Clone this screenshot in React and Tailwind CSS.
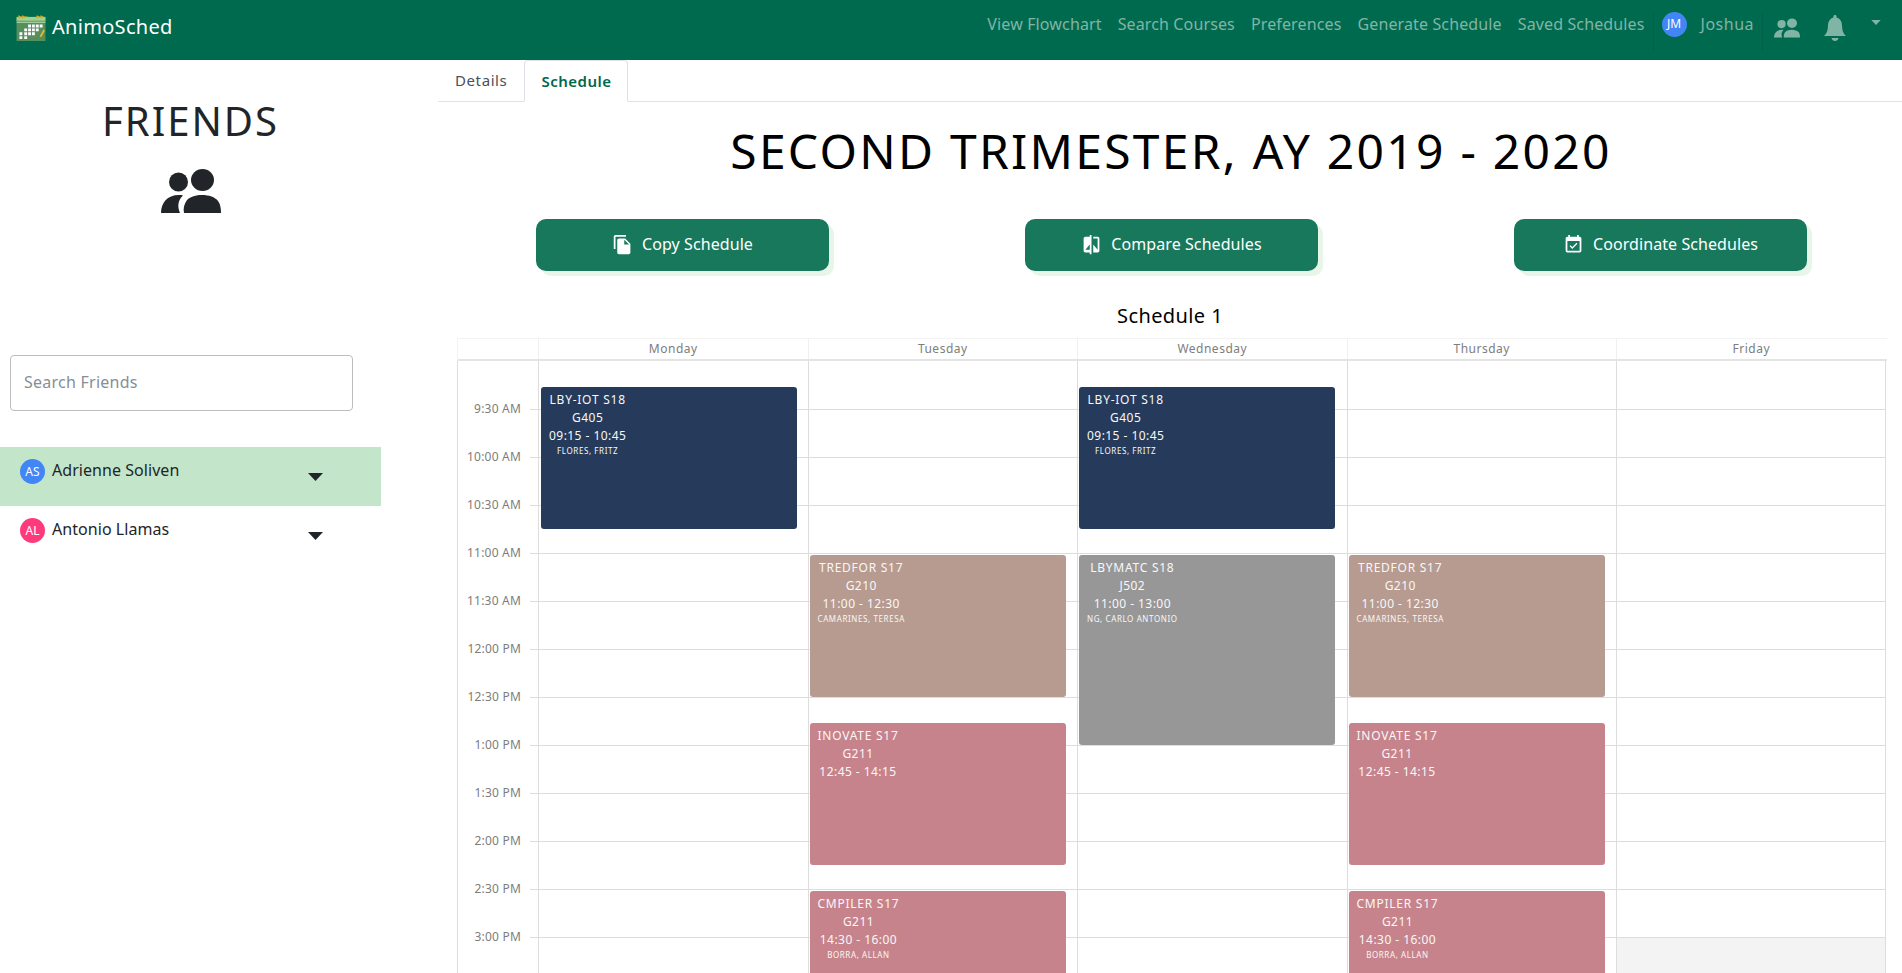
import { MdFileCopy, MdCompare, MdEventAvailable } from 'react-icons/md';

const navLinks = ['View Flowchart', 'Search Courses', 'Preferences', 'Generate Schedule', 'Saved Schedules'];

const friends = [
  { initials: 'AS', name: 'Adrienne Soliven', avatar: 'bg-[#4285f4]', row: 'bg-[#c3e5ca]' },
  { initials: 'AL', name: 'Antonio Llamas', avatar: 'bg-[#ff3a7c]', row: 'bg-white' },
];

const slots = ['', '9:30 AM', '10:00 AM', '10:30 AM', '11:00 AM', '11:30 AM', '12:00 PM', '12:30 PM', '1:00 PM', '1:30 PM', '2:00 PM', '2:30 PM', '3:00 PM'];

const days = ['Monday', 'Tuesday', 'Wednesday', 'Thursday', 'Friday'];

const lbyIot = { title: 'LBY-IOT S18', room: 'G405', time: '09:15 - 10:45', prof: 'FLORES, FRITZ', top: 26, height: 142, color: 'bg-[#263b5b]' };
const tredfor = { title: 'TREDFOR S17', room: 'G210', time: '11:00 - 12:30', prof: 'CAMARINES, TERESA', top: 194, height: 142, color: 'bg-[#b79b90]' };
const inovate = { title: 'INOVATE S17', room: 'G211', time: '12:45 - 14:15', prof: '', top: 362, height: 142, color: 'bg-[#c7838b]' };
const cmpiler = { title: 'CMPILER S17', room: 'G211', time: '14:30 - 16:00', prof: 'BORRA, ALLAN', top: 530, height: 142, color: 'bg-[#c7838b]' };
const lbymatc = { title: 'LBYMATC S18', room: 'J502', time: '11:00 - 13:00', prof: 'NG, CARLO ANTONIO', top: 194, height: 190, color: 'bg-[#979797]' };

const schedule = [
  { left: 3, events: [lbyIot] },
  { left: 2, events: [tredfor, inovate, cmpiler] },
  { left: 2, events: [lbyIot, lbymatc] },
  { left: 2, events: [tredfor, inovate, cmpiler] },
  { left: 2, events: [] },
];

const PeopleIcon = ({ className }) => (
  <svg viewBox="0 0 60 44" className={className} fill="currentColor">
    <ellipse cx="17.5" cy="13" rx="9.5" ry="9.5" />
    <ellipse cx="41.5" cy="11" rx="11.5" ry="11" />
    <path d="M0 44c0-10 6-18 18-18 1.500 0 3 .1 4 .4C17 31 16 37 19 44z" />
    <path d="M23 44c-1-4 0-9 3-13 3.500-3.500 9-5 15-5 7 0 13 2 16 6 2.500 3 3 8 3 12z" />
  </svg>
);

const BellIcon = ({ className }) => (
  <svg viewBox="0 0 22 26" className={className} fill="currentColor">
    <path d="M11 0c1 0 1.600.7 1.600 1.600v.8C16 3.300 17.800 6 18 10c.2 4 .5 8 4 11H0c3.500-3 3.800-7 4-11 .2-4 2-6.700 5.400-7.600v-.8C9.400.7 10 0 11 0z" />
    <path d="M7.500 23h7c-.3 1.800-1.700 3-3.500 3s-3.200-1.200-3.500-3z" />
  </svg>
);

const Logo = () => (
  <svg viewBox="0 0 30 28" className="w-[30px] h-[27px]">
    <rect x="0" y="5" width="30" height="23" fill="#558f5c" />
    <rect x="0" y="3" width="30" height="4" fill="#9ed28f" />
    <rect x="0" y="8" width="30" height="1" fill="#c9e6c0" />
    <path d="M2 1l3 2-3 2zM6 1l3 2-3 2zM21 1l3 2-3 2zM25 1l3 2-3 2z" fill="#e0aa1c" />
    <path d="M2 3h10M20 3h8" stroke="#e0aa1c" strokeWidth="0.8" />
    <path d="M12 11h3v3h-3zM16 11h3v3h-3zM20 11h3v3h-3zM24 11h3v3h-3zM8 15h3v3H8zM12 15h3v3h-3zM16 15h3v3h-3zM20 15h3v3h-3zM3 19h3v3H3zM8 19h3v3H8zM12 19h3v3h-3zM16 19h3v3h-3zM3 23h3v3H3zM8 23h3v3H8z" fill="#fff" />
    <path d="M24 23l4-7 1.500 1-4 7z" fill="#f1b82d" />
  </svg>
);

const Caret = ({ className }) => (
  <svg viewBox="0 0 15 8" className={className} fill="currentColor">
    <path d="M0 0h15L7.500 8z" />
  </svg>
);

const Header = () => (
  <header className="h-[60px] bg-[#006a4e] flex items-start justify-between pl-4 pr-[21px]">
    <div className="flex items-center gap-[6px] h-[54px]">
      <Logo />
      <span className="text-white text-[20px] tracking-[0.3px]">AnimoSched</span>
    </div>
    <div className="flex items-center h-[48px] text-[#80b5a6]">
      <nav className="flex gap-4 pr-2 text-[16px] tracking-[0.13px]">
        {navLinks.map((link) => (
          <a key={link}>{link}</a>
        ))}
      </nav>
      <div className="flex items-center h-[38px] mt-[16px] pb-[16px] border-l border-r border-[#00604a] px-2">
        <span className="w-[25px] h-[25px] rounded-full bg-[#4285f4] text-white text-[12px] flex items-center justify-center">JM</span>
        <span className="ml-[14px] text-[16px] tracking-[0.5px]">Joshua</span>
      </div>
      <PeopleIcon className="ml-[11px] w-[26px] h-[20px] mt-[8px]" />
      <BellIcon className="ml-[24px] w-[22px] h-[26px] mt-[8px]" />
      <Caret className="ml-[25px] w-[10px] h-[5px] mb-[3px]" />
    </div>
  </header>
);

const Sidebar = () => (
  <aside className="w-[381px] shrink-0">
    <h1 className="mt-[37px] text-[40px] leading-[48px] text-center text-[#212529] tracking-[2px]">FRIENDS</h1>
    <PeopleIcon className="mt-6 mx-auto w-[60px] h-[44px] text-[#212529]" />
    <div className="mt-[142px] ml-[10px] w-[343px] h-[56px] border border-[#bdbdbd] rounded-[4px] flex items-center pl-[13px] pb-[2px] text-[16px] tracking-[0.25px] text-[#868e96]">
      Search Friends
    </div>
    <div className="mt-[36px]">
      {friends.map((friend) => (
        <div key={friend.name} className={`h-[59px] pl-5 pr-[58px] pt-3 flex items-start ${friend.row}`}>
          <span className={`w-[25px] h-[25px] rounded-full text-white text-[12px] flex items-center justify-center ${friend.avatar}`}>
            {friend.initials}
          </span>
          <span className="ml-[7px] text-[16px] tracking-[0.05px] text-[#212529] leading-[23px]">{friend.name}</span>
          <Caret className="ml-auto mt-[14px] w-[15px] h-[8px] text-[#212529]" />
        </div>
      ))}
    </div>
  </aside>
);

const Tabs = () => (
  <div className="flex h-[42px] border-b border-[#dee2e6]">
    <div className="h-[41px] px-[17px] flex items-center text-[15px] tracking-[0.6px] text-[#495057]">Details</div>
    <div className="h-[42px] -mb-px px-4 flex items-center bg-white border border-b-white border-[#dee2e6] rounded-t-[4px] text-[15px] tracking-[0.5px] font-semibold text-[#00684a]">Schedule</div>
  </div>
);

const ActionButton = ({ icon: Icon, label }) => (
  <div className="flex justify-center">
    <button className="w-[293px] h-[52px] pb-[2px] rounded-[10px] bg-[#18785c] text-white text-[16px] tracking-[0.08px] shadow-[5px_5px_0_#e8f5e9] flex items-center justify-center gap-[9px]">
      <Icon size={21} />
      {label}
    </button>
  </div>
);

const EventCard = ({ event, left }) => (
  <div
    className={`absolute w-[256px] rounded-[3px] pl-2 pt-1 text-[#f8f8f8] ${event.color}`}
    style={{ top: event.top, left, height: event.height }}
  >
    <div className="inline-block text-center text-[12px] leading-[18px] tracking-[0.45px]">
      <div className="tracking-[0.75px]">{event.title}</div>
      <div>{event.room}</div>
      <div>{event.time}</div>
      <div className="text-[8px] leading-[12px] tracking-[0.6px]">{event.prof}</div>
    </div>
  </div>
);

const Calendar = () => (
  <div className="ml-[19px] mr-[15px] border-l border-t border-[#f3f3f3]">
    <div className="grid grid-cols-[80px_repeat(5,269.5px)] h-[22px] border-b-2 border-[#e4e4e4] text-[12px] tracking-[0.5px] text-[#7d7d7d]">
      <div />
      {days.map((day) => (
        <div key={day} className="text-center leading-[19px] border-l border-[#f0f0f0]">{day}</div>
      ))}
    </div>
    <div className="relative border-l border-[#dddddd] -ml-px">
      {slots.map((label, i) => (
        <div key={i} className="grid grid-cols-[80px_repeat(5,269.5px)] h-12">
          <div className="relative">
            {label && (
              <>
                <span className="absolute right-[17px] -top-[9px] text-[12px] leading-[18px] tracking-[0.2px] text-[#7d7d7d]">{label}</span>
                <span className="absolute right-0 top-0 w-2 border-t border-[#dddddd]" />
              </>
            )}
          </div>
          {days.map((day) => (
            <div
              key={day}
              className={`border-l border-[#dddddd] ${label ? 'border-t' : ''} ${day === 'Friday' ? 'border-r' : ''} ${day === 'Friday' && label === '3:00 PM' ? 'bg-[#f3f3f3]' : ''}`}
            />
          ))}
        </div>
      ))}
      <div className="absolute inset-0 grid grid-cols-[80px_repeat(5,269.5px)]">
        <div />
        {schedule.map((col, i) => (
          <div key={i} className="relative">
            {col.events.map((event) => (
              <EventCard key={event.title} event={event} left={col.left} />
            ))}
          </div>
        ))}
      </div>
    </div>
  </div>
);

export default function App() {
  return (
    <div className="h-screen overflow-hidden bg-white font-['Noto_Sans',sans-serif]">
      <Header />
      <div className="flex">
        <Sidebar />
        <main className="ml-[57px] flex-1 min-w-0">
          <Tabs />
          <h1 className="mt-[17px] h-[65px] pl-[2px] text-[48px] leading-[64px] text-center text-black tracking-[2.25px]">SECOND TRIMESTER, AY 2019 - 2020</h1>
          <div className="mt-[35px] grid grid-cols-[489px_489px_489px]">
            <ActionButton icon={MdFileCopy} label="Copy Schedule" />
            <ActionButton icon={MdCompare} label="Compare Schedules" />
            <ActionButton icon={MdEventAvailable} label="Coordinate Schedules" />
          </div>
          <div className="mt-[31px] h-[36px] text-center text-[20px] leading-[28px] tracking-[0.4px] text-black">Schedule 1</div>
          <Calendar />
        </main>
      </div>
    </div>
  );
}
